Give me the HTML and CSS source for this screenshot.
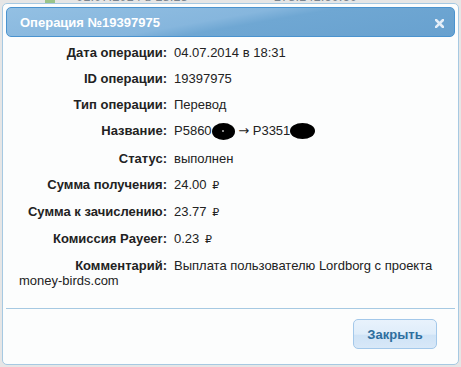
FILE: index.html
```html
<!DOCTYPE html>
<html lang="ru">

<head>
    <meta charset="UTF-8">
    <title>Операция №19397975</title>
    <link rel="stylesheet" href="styles.css">
</head>

<body>
    <div class="page">
        <div class="history-row">
            <span class="ok-icon"></span>
            <span class="h-date">01.07.2014 в 18:15</span>
            <span class="h-ip">178.141.60.60</span>
        </div>
    </div>

    <div class="dialog">
        <div class="titlebar">
            <span class="title">Операция №19397975</span>
            <svg class="close" width="9" height="9" viewBox="0 0 9 9">
                <path d="M1 1 L8 8 M8 1 L1 8" stroke="#e4eef8" stroke-width="2.6" stroke-linecap="square"/>
            </svg>
        </div>

        <div class="content">
            <div class="row"><span class="label">Дата операции:</span>04.07.2014 в 18:31</div>
            <div class="row"><span class="label">ID операции:</span>19397975</div>
            <div class="row"><span class="label">Тип операции:</span>Перевод</div>
            <div class="row"><span class="label">Название:</span>P5860<span class="blot blot-a"></span> <span class="arrow">→</span> P3351<span class="blot blot-b"></span></div>
            <div class="row"><span class="label">Статус:</span>выполнен</div>
            <div class="row"><span class="label">Сумма получения:</span>24.00 <span class="rub">₽</span></div>
            <div class="row"><span class="label">Сумма к зачислению:</span>23.77 <span class="rub">₽</span></div>
            <div class="row"><span class="label">Комиссия Payeer:</span>0.23 <span class="rub">₽</span></div>
            <div class="row"><span class="label">Комментарий:</span>Выплата пользователю Lordborg с проекта money-birds.com</div>
        </div>

        <div class="buttonpane">
            <button type="button">Закрыть</button>
        </div>
    </div>
</body>

</html>
```

FILE: styles.css
```css
body {
    margin: 0;
    background: #e6e6e6;
    font-family: "Liberation Sans", Arial, sans-serif;
    font-size: 13px;
    color: #222;
    overflow: hidden;
}

.page {
    height: 367px;
}

.history-row {
    margin-top: -11px;
    height: 15px;
    line-height: 15px;
    font-size: 13px;
    color: #7a8590;
    display: flex;
    align-items: center;
}

.ok-icon {
    width: 10px;
    height: 12px;
    margin-left: 45px;
    background: #9bc48a;
}

.h-date {
    margin-left: 21px;
}

.h-ip {
    margin-left: 86px;
}

.dialog {
    position: absolute;
    left: 2px;
    top: 3px;
    width: 449px;
    height: 354px;
    padding: 3px;
    border: 1px solid #a6c9e2;
    border-radius: 5px;
    background: #fcfdfd;
    display: flex;
    flex-direction: column;
}

.titlebar {
    height: 28px;
    border: 1px solid #4a93cf;
    border-radius: 5px;
    background: linear-gradient(170deg, #93c0e3 0%, #86b6dd 45%, #6fa7d3 55%, #68a1cf 100%);
    display: flex;
    align-items: center;
    justify-content: space-between;
    padding: 0 10px 0 13px;
}

.title {
    color: #fff;
    font-weight: bold;
    font-size: 13px;
    margin-top: 1px;
}

.close {
    margin-top: 2px;
}

.content {
    padding: 8px 0 0 13px;
    flex: 1;
}

.row {
    line-height: 15px;
    margin-bottom: 11px;
    padding-right: 20px;
}

.label {
    display: inline-block;
    width: 148px;
    margin-right: 7px;
    text-align: right;
    font-weight: bold;
}

.arrow {
    font-family: "DejaVu Sans", sans-serif;
    font-size: 13px;
}

.rub {
    font-family: "DejaVu Sans", sans-serif;
    font-size: 11px;
    margin-left: 2px;
}

.blot {
    display: inline-block;
    background: #000;
    border-radius: 50%;
    position: relative;
}

.blot-a {
    width: 23px;
    height: 17px;
    vertical-align: -5px;
}

.blot-a::after {
    content: "";
    position: absolute;
    left: 10px;
    top: 7px;
    width: 2px;
    height: 2px;
    background: #888;
}

.blot-b {
    width: 25px;
    height: 16px;
    vertical-align: -4px;
}

.buttonpane {
    border-top: 1px solid #a6c9e2;
    padding: 10px 18px 12px 0;
    display: flex;
    justify-content: flex-end;
}

.buttonpane button {
    width: 84px;
    height: 30px;
    border: 1px solid #a3c8ea;
    border-radius: 5px;
    background: linear-gradient(#e8f2fc 0%, #dfedfa 50%, #cfe3f6 55%, #d8e8f8 100%);
    color: #2e6e9e;
    font-family: "Liberation Sans", Arial, sans-serif;
    font-weight: bold;
    font-size: 13px;
    cursor: pointer;
}
```
